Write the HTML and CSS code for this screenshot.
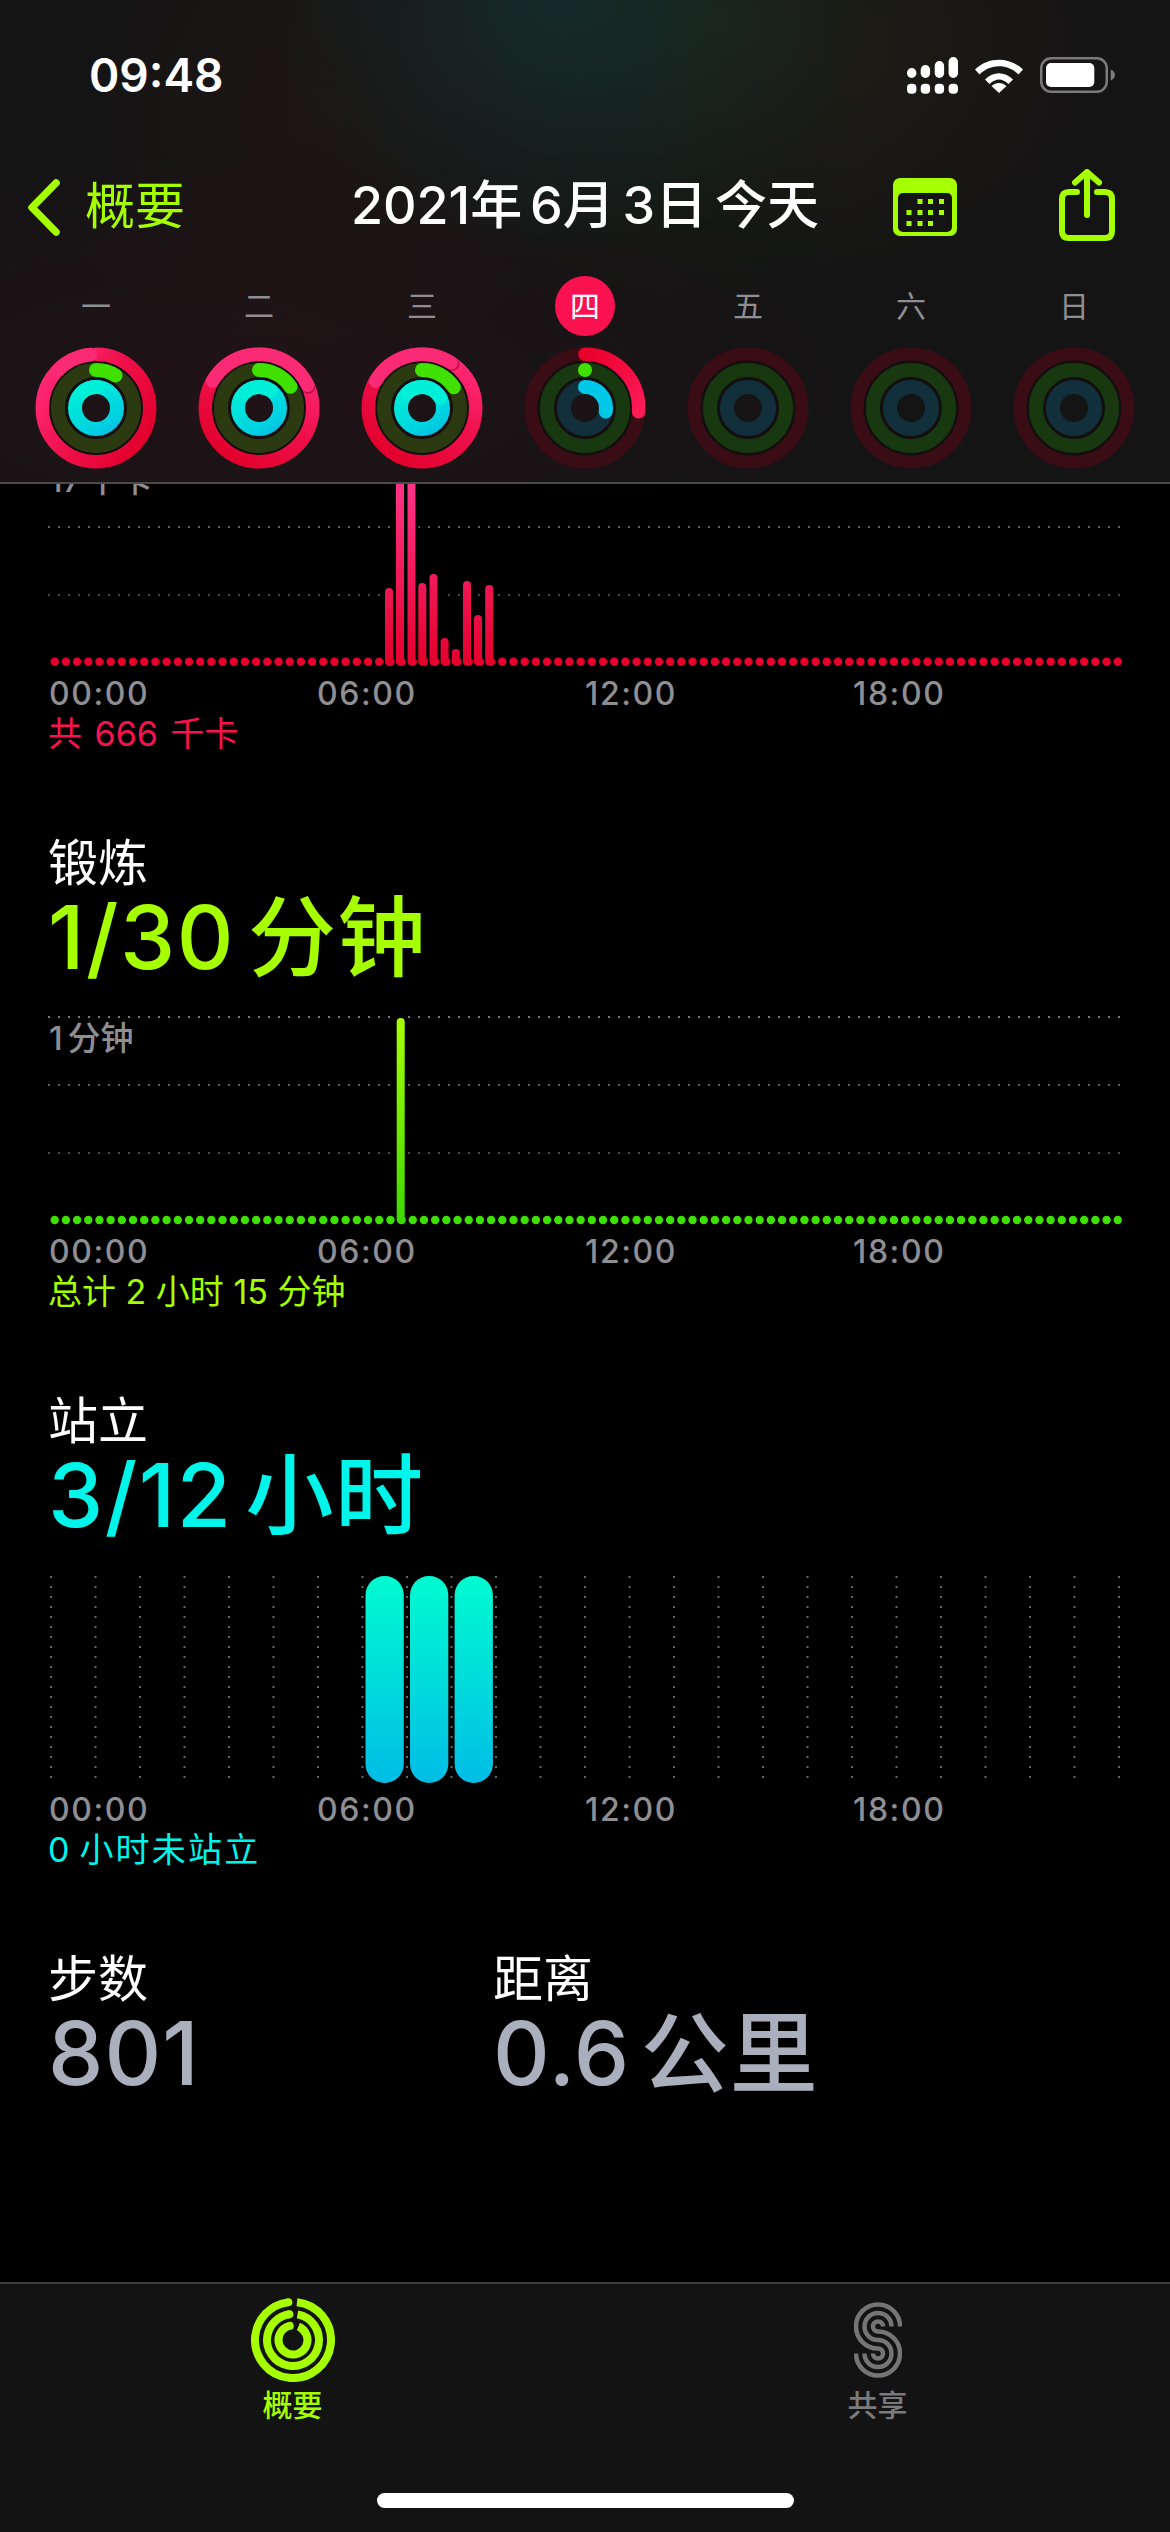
FILE: index.html
```html
<!DOCTYPE html>
<html lang="zh-CN">
<head>
    <meta charset="UTF-8">
    <meta name="viewport" content="width=device-width,initial-scale=1.0">
    <title>活动</title>
    <link rel="stylesheet" href="styles.css">
</head>
<body>
<svg class="defs" aria-hidden="true">
    <defs>
        <!-- ring gradients are in the circle's rotated space: local +x is up, local +y is right -->
        <linearGradient id="ringRed" gradientUnits="userSpaceOnUse" x1="-20" y1="60" x2="50" y2="-45">
            <stop offset="0" stop-color="#e2002b"/>
            <stop offset="0.55" stop-color="#f0124e"/>
            <stop offset="1" stop-color="#ff2a78"/>
        </linearGradient>
        <linearGradient id="ringCyan" gradientUnits="userSpaceOnUse" x1="22" y1="26" x2="-10" y2="-26">
            <stop offset="0" stop-color="#0cb6e4"/>
            <stop offset="0.25" stop-color="#00d0e2"/>
            <stop offset="1" stop-color="#00f0d8"/>
        </linearGradient>
        <linearGradient id="arcRed" gradientUnits="userSpaceOnUse" x1="54" y1="0" x2="0" y2="54">
            <stop offset="0" stop-color="#e8002c"/>
            <stop offset="1" stop-color="#ff1a58"/>
        </linearGradient>
        <linearGradient id="barRed" gradientUnits="userSpaceOnUse" x1="0" y1="26" x2="0" y2="208">
            <stop offset="0" stop-color="#ff3488"/>
            <stop offset="1" stop-color="#e3002a"/>
        </linearGradient>
        <linearGradient id="barGreen" gradientUnits="userSpaceOnUse" x1="0" y1="2" x2="0" y2="208">
            <stop offset="0" stop-color="#a8ff00"/>
            <stop offset="1" stop-color="#3cd800"/>
        </linearGradient>
        <linearGradient id="barCyan" gradientUnits="userSpaceOnUse" x1="0" y1="2" x2="0" y2="209">
            <stop offset="0" stop-color="#00fbd0"/>
            <stop offset="1" stop-color="#00bde6"/>
        </linearGradient>
        <symbol id="ringEmpty" viewBox="-61 -61 122 122">
            <circle class="track track-red dim" r="53.7"/>
            <circle class="ring-gap" r="38"/>
            <circle class="track track-green dim" r="38"/>
            <circle class="track track-cyan dim" r="21"/>
        </symbol>
    </defs>
</svg>

<div class="phone">
    <header class="top">
        <div class="status">
            <span class="clock">09:48</span>
            <div class="status-icons">
                <svg class="ic-signal" viewBox="0 0 51 37">
                    <rect x="0" y="11" width="9.4" height="10" rx="4.7"/>
                    <rect x="13.700" y="8" width="9.4" height="13" rx="4.7"/>
                    <rect x="27.700" y="4" width="9.4" height="17" rx="4.7"/>
                    <rect x="41.600" y="0" width="9.4" height="21" rx="4.7"/>
                    <rect x="0" y="26.7" width="9.4" height="10" rx="4"/>
                    <rect x="13.700" y="26.7" width="9.4" height="10" rx="4"/>
                    <rect x="27.700" y="26.7" width="9.4" height="10" rx="4"/>
                    <rect x="41.600" y="26.7" width="9.4" height="10" rx="4"/>
                </svg>
                <svg class="ic-wifi" viewBox="0 0 48 35">
                    <path d="M0 11.5C13.5-1.5 34.500-1.500 48 11.500L43.500 16.500C32.500 5.500 15.500 5.500 4.500 16.500Z"/>
                    <path d="M10 21.500C18.500 13 29.500 13 38 21.500L33.500 26C27 20 21 20 14.500 26Z"/>
                    <path d="M24 35L16.500 28C21 24 27 24 31.500 28Z"/>
                </svg>
                <svg class="ic-battery" viewBox="0 0 75 36">
                    <rect class="batt-frame" x="1.250" y="1.250" width="65.500" height="33.500" rx="10"/>
                    <rect class="batt-fill" x="6" y="6" width="48.300" height="24" rx="5"/>
                    <path class="batt-nub" d="M70.700 12.500C73.500 13.500 75 15.500 75 18C75 20.500 73.500 22.500 70.700 23.500Z"/>
                </svg>
            </div>
        </div>

        <nav class="navbar">
            <a class="back">
                <svg class="ic-back" viewBox="0 0 33 57"><path d="M29 4L5 28.500L29 53"/></svg>
                <span>概要</span>
            </a>
            <h1 class="day-title">2021年 6月 3日 今天</h1>
            <div class="nav-actions">
                <svg class="ic-cal" viewBox="0 0 64 58">
                    <rect class="cal-body" width="64" height="58" rx="7"/>
                    <rect class="cal-hole" x="5" y="15" width="54" height="39" rx="5"/>
                    <g class="cal-dots">
                        <rect x="24.500" y="21" width="5" height="5"/><rect x="35" y="21" width="5" height="5"/><rect x="46" y="21" width="5" height="5"/>
                        <rect x="13.500" y="32" width="5" height="5"/><rect x="24.500" y="32" width="5" height="5"/><rect x="35" y="32" width="5" height="5"/><rect x="46" y="32" width="5" height="5"/>
                        <rect x="13.500" y="43" width="5" height="5"/><rect x="24.500" y="43" width="5" height="5"/><rect x="35" y="43" width="5" height="5"/>
                    </g>
                </svg>
                <svg class="ic-share" viewBox="0 0 56 72">
                    <path d="M18 23H10Q3 23 3 30V62Q3 69 10 69H46Q53 69 53 62V30Q53 23 46 23H38"/>
                    <path d="M28 46V3M16 13.500L28 3L40 13.500"/>
                </svg>
            </div>
        </nav>

        <div class="week">
            <div class="day">
                <span class="day-name">一</span>
                <svg class="ring" viewBox="-61 -61 122 122">
                    <circle class="ring-gap" r="38"/>
                    <circle class="track track-green" r="38"/>
                    <circle class="arc arc-red" r="53.700" pathLength="360" stroke-dasharray="354 360" transform="rotate(-90)"/>
                    <circle class="arc arc-pink" r="53.700" pathLength="360" stroke-dasharray="40 360" transform="rotate(224)"/>
                    <circle class="arc arc-green" r="38" pathLength="360" stroke-dasharray="31 360" transform="rotate(-90)"/>
                    <circle class="track ring-cyan" r="21"/>
                    <circle class="arc arc-aqua" r="21" pathLength="360" stroke-dasharray="50 360" transform="rotate(-135)"/>
                </svg>
            </div>
            <div class="day">
                <span class="day-name">二</span>
                <svg class="ring" viewBox="-61 -61 122 122">
                    <circle class="ring-gap" r="38"/>
                    <circle class="track track-green" r="38"/>
                    <circle class="track ring-red" r="53.700"/>
                    <circle class="arc arc-shade" r="53.700" pathLength="360" stroke-dasharray="127 360" transform="rotate(-150)"/>
                    <circle class="arc arc-pink" r="53.700" pathLength="360" stroke-dasharray="125 360" transform="rotate(-150)"/>
                    <circle class="arc arc-green" r="38" pathLength="360" stroke-dasharray="56 360" transform="rotate(-90)"/>
                    <circle class="track ring-cyan" r="21"/>
                    <circle class="arc arc-aqua" r="21" pathLength="360" stroke-dasharray="80 360" transform="rotate(-135)"/>
                </svg>
            </div>
            <div class="day">
                <span class="day-name">三</span>
                <svg class="ring" viewBox="-61 -61 122 122">
                    <circle class="ring-gap" r="38"/>
                    <circle class="track track-green" r="38"/>
                    <circle class="track ring-red" r="53.700"/>
                    <circle class="arc arc-shade" r="53.700" pathLength="360" stroke-dasharray="95 360" transform="rotate(-150)"/>
                    <circle class="arc arc-pink" r="53.700" pathLength="360" stroke-dasharray="93 360" transform="rotate(-150)"/>
                    <circle class="arc arc-green" r="38" pathLength="360" stroke-dasharray="57 360" transform="rotate(-90)"/>
                    <circle class="track ring-cyan" r="21"/>
                    <circle class="arc arc-aqua" r="21" pathLength="360" stroke-dasharray="106 360" transform="rotate(-135)"/>
                </svg>
            </div>
            <div class="day">
                <span class="day-name today">四</span>
                <svg class="ring" viewBox="-61 -61 122 122">
                    <use href="#ringEmpty" x="-61" y="-61" width="122" height="122"/>
                    <circle class="arc arc-now" r="53.700" pathLength="360" stroke-dasharray="94 360" transform="rotate(-90)"/>
                    <circle class="arc arc-green" r="38" pathLength="360" stroke-dasharray="0 360" transform="rotate(-90)"/>
                    <circle class="arc arc-blue" r="21" pathLength="360" stroke-dasharray="100 360" transform="rotate(-90)"/>
                </svg>
            </div>
            <div class="day">
                <span class="day-name">五</span>
                <svg class="ring" viewBox="-61 -61 122 122"><use href="#ringEmpty" x="-61" y="-61" width="122" height="122"/></svg>
            </div>
            <div class="day">
                <span class="day-name">六</span>
                <svg class="ring" viewBox="-61 -61 122 122"><use href="#ringEmpty" x="-61" y="-61" width="122" height="122"/></svg>
            </div>
            <div class="day">
                <span class="day-name">日</span>
                <svg class="ring" viewBox="-61 -61 122 122"><use href="#ringEmpty" x="-61" y="-61" width="122" height="122"/></svg>
            </div>
        </div>
    </header>

    <main class="scroll">
        <section class="metric metric-move">
            <div class="plot">
                <span class="plot-max">17 千卡</span>
                <svg class="chart" viewBox="48 0 1074 215">
                    <path class="grid grid-2" d="M48 69H1122"/>
                    <path class="grid grid-3" d="M48 137H1122"/>
                    <path class="halo" d="M400 0V140M411.500 0V140M389 130V140M422.300 125V140M433.500 116V140M467 123V140M489.200 127V140"/>
                    <path class="dots dots-red" d="M54.700 203.700H1120"/>
                    <path class="bars bars-red" d="M389 134V203.500M400 20V203.500M411.500 20V203.500M422.300 129V203.500M433.500 120V203.500M444.600 184V203.500M455.800 195V203.500M467 127V203.500M478 161V203.500M489.200 131V203.500"/>
                </svg>
            </div>
            <div class="axis"><span>00:00</span><span>06:00</span><span>12:00</span><span>18:00</span></div>
            <p class="total total-move">共 666 千卡</p>
        </section>

        <section class="metric">
            <h2 class="metric-name">锻炼</h2>
            <p class="metric-value value-exercise">1/30 分钟</p>
            <div class="plot">
                <span class="plot-max plot-max-shown">1 分钟</span>
                <svg class="chart" viewBox="48 0 1074 215">
                    <path class="grid grid-1" d="M48 1H1122"/>
                    <path class="grid grid-2" d="M48 69H1122"/>
                    <path class="grid grid-3" d="M48 137H1122"/>
                    <path class="halo" d="M400.700 0V140"/>
                    <path class="dots dots-green" d="M54.700 204H1120"/>
                    <path class="bars bars-green" d="M400.700 6V203.500"/>
                </svg>
            </div>
            <div class="axis"><span>00:00</span><span>06:00</span><span>12:00</span><span>18:00</span></div>
            <p class="total total-exercise">总计 2 小时 15 分钟</p>
        </section>

        <section class="metric">
            <h2 class="metric-name">站立</h2>
            <p class="metric-value value-stand">3/12 小时</p>
            <div class="plot">
                <svg class="chart" viewBox="48 0 1074 215">
                    <path class="grid-v" d="M51 2V206M95.500 2V206M140 2V206M184.500 2V206M229 2V206M273.500 2V206M318 2V206M362.500 2V206M407 2V206M451.500 2V206M496 2V206M540.500 2V206M585 2V206M629.500 2V206M674 2V206M718.500 2V206M763 2V206M807.500 2V206M852 2V206M896.500 2V206M941 2V206M985.500 2V206M1030 2V206M1074.500 2V206M1119 2V206"/>
                    <rect class="bar-hour" x="365.500" y="2" width="38.300" height="207" rx="19"/>
                    <rect class="bar-hour" x="410" y="2" width="38.300" height="207" rx="19"/>
                    <rect class="bar-hour" x="454.600" y="2" width="38.300" height="207" rx="19"/>
                </svg>
            </div>
            <div class="axis"><span>00:00</span><span>06:00</span><span>12:00</span><span>18:00</span></div>
            <p class="total total-stand">0 小时未站立</p>
        </section>

        <section class="metric stats">
            <div>
                <h2 class="metric-name">步数</h2>
                <p class="metric-value value-stat">801</p>
            </div>
            <div>
                <h2 class="metric-name">距离</h2>
                <p class="metric-value value-stat">0.6 公里</p>
            </div>
        </section>
    </main>

    <footer class="tabbar">
        <div class="tabs">
            <div class="tab tab-on">
                <svg class="tab-icon" viewBox="-42 -42 84 84">
                    <circle class="tab-ring" r="38" pathLength="360" stroke-dasharray="346 360" transform="rotate(-84)"/>
                    <circle class="tab-cap" r="38" pathLength="360" stroke-dasharray="0 360" transform="rotate(-97)"/>
                    <circle class="tab-ring" r="26" pathLength="360" stroke-dasharray="342 360" transform="rotate(-80)"/>
                    <circle class="tab-cap" r="26" pathLength="360" stroke-dasharray="0 360" transform="rotate(-98)"/>
                    <circle class="tab-ring" r="14.500" pathLength="360" stroke-dasharray="325 360" transform="rotate(-68)"/>
                    <circle class="tab-cap" r="14.500" pathLength="360" stroke-dasharray="0 360" transform="rotate(-103)"/>
                </svg>
                <span>概要</span>
            </div>
            <div class="tab">
                <svg class="tab-icon share-icon" viewBox="0 0 48 77">
                    <path d="M46 25A22 22 0 1 0 24 47A5 5 0 1 1 19 52"/>
                    <path d="M37.500 25A13.500 13.500 0 1 0 24 38.500A13.500 13.500 0 1 1 10.500 52"/>
                    <path d="M29 25A5 5 0 1 0 24 30A22 22 0 1 1 2 52"/>
                </svg>
                <span>共享</span>
            </div>
        </div>
        <div class="home-bar"></div>
    </footer>
</div>
</body>
</html>
```

FILE: styles.css
```css
* {
    box-sizing: border-box;
}
html, body {
    margin: 0;
    padding: 0;
    background: #000;
}
body {
    font-family: Inter, 'Noto Sans CJK SC', sans-serif;
    color: #fff;
}
h1, h2, p {
    margin: 0;
    font-weight: 400;
}
.defs {
    position: absolute;
    width: 0;
    height: 0;
}
.phone {
    width: 1170px;
    height: 2532px;
    display: flex;
    flex-direction: column;
    overflow: hidden;
}

/* top bar */
.top {
    flex: none;
    height: 484px;
    border-bottom: 2px solid #4a4a4c;
    background-color: #141414;
    background-image:
        radial-gradient(ellipse 300px 260px at 560px 0, rgba(20, 60, 60, 0.5), transparent),
        radial-gradient(ellipse 360px 300px at 720px 20px, rgba(40, 70, 30, 0.2), transparent),
        radial-gradient(ellipse 260px 300px at 310px 120px, rgba(70, 30, 20, 0.16), transparent),
        radial-gradient(ellipse 260px 220px at 880px 60px, rgba(70, 30, 20, 0.15), transparent),
        radial-gradient(ellipse 640px 240px at 240px 390px, rgba(60, 15, 30, 0.3), transparent);
}
.status {
    height: 102px;
    padding: 48px 55px 0 89px;
    display: flex;
    justify-content: space-between;
    align-items: center;
}
.clock {
    font-size: 46px;
    font-weight: 600;
    line-height: 54px;
}
.status-icons {
    display: flex;
    align-items: center;
    gap: 17px;
}
.status-icons svg {
    display: block;
    fill: #fff;
}
.ic-signal {
    width: 51px;
    height: 37px;
}
.ic-wifi {
    width: 48px;
    height: 35px;
}
.ic-battery {
    width: 75px;
    height: 36px;
}
.batt-frame {
    fill: none;
    stroke: #7a7a7c;
    stroke-width: 2.5;
}
.status-icons .batt-nub {
    fill: #7a7a7c;
}

.navbar {
    height: 74px;
    margin-top: 68px;
    display: grid;
    grid-template-columns: 1fr auto 1fr;
    grid-template-rows: 74px;
    align-items: center;
}
.back {
    display: flex;
    align-items: center;
    gap: 25px;
    padding-left: 27px;
    font-size: 50px;
    line-height: 60px;
    color: #a6ff00;
}
.back span {
    padding-bottom: 2px;
}
.ic-back {
    width: 33px;
    height: 57px;
    fill: none;
    stroke: #a6ff00;
    stroke-width: 7.5;
    stroke-linecap: round;
    stroke-linejoin: round;
}
.day-title {
    font-size: 52px;
    font-weight: 500;
    line-height: 60px;
    word-spacing: -6px;
    padding-bottom: 2px;
    white-space: nowrap;
}
.nav-actions {
    display: flex;
    justify-content: flex-end;
    align-items: center;
    gap: 102px;
    padding-right: 55px;
}
.ic-cal {
    width: 64px;
    height: 58px;
}
.cal-body {
    fill: #a6ff00;
}
.cal-hole {
    fill: #141414;
}
.cal-dots {
    fill: #a6ff00;
}
.ic-share {
    width: 56px;
    height: 72px;
    margin-bottom: 4px;
    fill: none;
    stroke: #a6ff00;
    stroke-width: 6;
    stroke-linecap: round;
    stroke-linejoin: round;
}

/* week of rings */
.week {
    margin-top: 32px;
    padding: 0 14.5px;
    display: grid;
    grid-template-columns: repeat(7, 163px);
}
.day {
    display: flex;
    flex-direction: column;
    align-items: center;
    gap: 11px;
}
.day-name {
    width: 60px;
    height: 60px;
    line-height: 60px;
    text-align: center;
    font-size: 30px;
    color: #8e8e93;
}
.today {
    border-radius: 50%;
    background: #fa1150;
    color: #fff;
}
.ring {
    display: block;
    width: 122px;
    height: 122px;
    fill: none;
}
.track, .arc, .ring-gap {
    fill: none;
    stroke-width: 14;
}
.arc {
    stroke-linecap: round;
}
.ring-gap {
    stroke: #130f11;
    stroke-width: 19;
}
.track-green {
    stroke: #2c3a12;
}
.track-red.dim {
    stroke: #3a0d14;
    stroke-width: 13.5;
}
.track-green.dim {
    stroke: #18380f;
}
.track-cyan.dim {
    stroke: #12303c;
}
.ring-red {
    stroke: url(#ringRed);
    stroke-width: 13.5;
}
.ring-cyan {
    stroke: url(#ringCyan);
}
.arc-red {
    stroke: url(#ringRed);
    stroke-width: 13.5;
}
.arc-pink {
    stroke: #fb2a74;
    stroke-width: 13.5;
}
.arc-shade {
    stroke: rgba(120, 0, 40, 0.5);
    stroke-width: 13.5;
}
.arc-now {
    stroke: url(#arcRed);
    stroke-width: 13.5;
}
.arc-green {
    stroke: #40e000;
}
.arc-aqua {
    stroke: #00efd8;
}
.arc-blue {
    stroke: #00c8e6;
}

/* scrolled content */
.scroll {
    flex: 1;
    min-height: 0;
    overflow: hidden;
    background: #000;
}
.metric {
    padding: 0 48px;
    margin-bottom: 82px;
}
.metric-move {
    margin-top: -26px;
}
.metric-name {
    font-size: 50px;
    line-height: 56px;
}
.metric-value {
    font-size: 88px;
    font-weight: 500;
    line-height: 92px;
    margin-bottom: 33px;
    letter-spacing: 1.5px;
    word-spacing: -12px;
    white-space: nowrap;
}
.value-exercise {
    color: #a6ff00;
}
.value-stand {
    color: #00f5ea;
}
.metric-value.value-stat {
    color: #a9afbc;
    margin-bottom: 0;
    letter-spacing: 1px;
    word-spacing: -14px;
}
.plot {
    position: relative;
    height: 215px;
}
.plot-max {
    position: absolute;
    left: 1px;
    top: 3px;
    font-size: 33px;
    line-height: 38px;
    font-weight: 500;
    word-spacing: -4px;
    color: #8e8e93;
}
.chart {
    display: block;
    width: 1074px;
    height: 215px;
    fill: none;
}
.grid {
    stroke-width: 2;
    stroke-dasharray: 2 8;
}
.grid-1 {
    stroke: #7a7a7a;
}
.grid-2 {
    stroke: #5e5e5e;
}
.grid-3 {
    stroke: #4a4a4a;
}
.grid-v {
    stroke: #666;
    stroke-width: 2;
    stroke-dasharray: 2 8;
}
.halo {
    stroke: #000;
    stroke-width: 14;
}
.dots {
    stroke-width: 8.4;
    stroke-linecap: round;
    stroke-dasharray: 0 11.19;
}
.dots-red {
    stroke: #e8002c;
}
.dots-green {
    stroke: #3ee000;
}
.bars {
    stroke-width: 8;
    stroke-linecap: round;
}
.bars-red {
    stroke: url(#barRed);
}
.bars-green {
    stroke: url(#barGreen);
}
.bar-hour {
    fill: url(#barCyan);
}
.axis {
    margin-top: 2px;
    padding-left: 1px;
    display: grid;
    grid-template-columns: repeat(4, 268px);
    font-size: 32px;
    line-height: 38px;
    font-weight: 500;
    letter-spacing: 1.6px;
    color: #8e8e93;
}
.total {
    margin-top: 2px;
    font-size: 34px;
    line-height: 38px;
    word-spacing: 0;
}
.total-move {
    color: #fa1150;
    word-spacing: 3px;
}
.total-exercise {
    color: #a6ff00;
}
.total-stand {
    color: #00f5ea;
    letter-spacing: 2.2px;
    word-spacing: -4px;
}
.stats {
    display: grid;
    grid-template-columns: 445px 1fr;
}

/* tab bar */
.tabbar {
    flex: none;
    height: 250px;
    border-top: 2px solid #3c3c3e;
    background: #131313;
    display: flex;
    flex-direction: column;
    align-items: center;
}
.tabs {
    width: 100%;
    padding-top: 14px;
    display: grid;
    grid-template-columns: 585px 585px;
}
.tab {
    display: flex;
    flex-direction: column;
    align-items: center;
    gap: 5px;
    font-size: 30px;
    font-weight: 500;
    line-height: 36px;
    color: #7a7a7a;
}
.tab-on {
    color: #a6ff00;
}
.tab-icon {
    display: block;
    width: 84px;
    height: 84px;
    fill: none;
}
.tab-ring {
    stroke: #a6ff00;
    stroke-width: 8;
}
.tab-cap {
    stroke: #a6ff00;
    stroke-width: 8;
    stroke-linecap: round;
}
.share-icon {
    width: 48px;
    padding: 3.5px 0;
    stroke: #757575;
    stroke-width: 4.5;
}
.home-bar {
    margin-top: auto;
    margin-bottom: 24px;
    width: 417px;
    height: 15px;
    border-radius: 8px;
    background: #fff;
}
```
